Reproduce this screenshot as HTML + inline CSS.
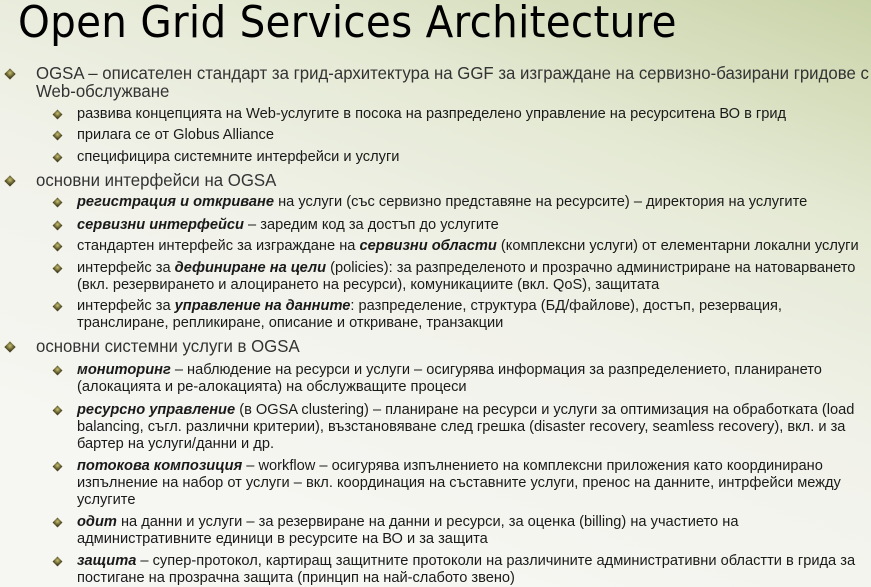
<!DOCTYPE html>
<html><head><meta charset="utf-8"><style>
body{margin:0;width:871px;height:587px;overflow:hidden;position:relative;font-family:"Liberation Sans",sans-serif;
background:linear-gradient(200deg,#c9d3a8 0%,#e4e9d3 25%,#f1f2ea 50%,#f6f6f2 80%);}
.t{position:absolute;left:18px;top:-3px;font-family:"DejaVu Sans",sans-serif;font-size:44px;color:#000;white-space:nowrap;letter-spacing:0.3px;transform:scaleX(0.92);transform-origin:0 0}
.l{position:absolute;white-space:nowrap;color:#222;transform-origin:0 0}
.a{left:36px;font-size:17.5px;color:#333;transform:scaleX(0.96)}
.b{left:77px;font-size:15px;color:#1a1a1a;transform:scaleX(0.975)}
.ba,.bb{position:absolute;width:8px;height:8px;background:radial-gradient(circle at 40% 40%,#c8c070,#4a4520 70%);transform:rotate(45deg)}
.ba{left:6px}.bb{left:54px;width:7px;height:7px}
i b,b i{font-weight:bold}
</style></head><body>
<div class="t">Open Grid Services Architecture</div>

<div class="ba" style="top:70px"></div>
<div class="l a" style="top:63px">OGSA – описателен стандарт за грид-архитектура на GGF за изграждане на сервизно-базирани гридове с</div>
<div class="l a" style="top:81px">Web-обслужване</div>
<div class="bb" style="top:111px"></div>
<div class="l b" style="top:105px">развива концепцията на Web-услугите в посока на разпределено управление на ресурситена ВО в грид</div>
<div class="bb" style="top:132px"></div>
<div class="l b" style="top:126px">прилага се от Globus Alliance</div>
<div class="bb" style="top:154px"></div>
<div class="l b" style="top:148px">специфицира системните интерфейси и услуги</div>

<div class="ba" style="top:177px"></div>
<div class="l a" style="top:170px">основни интерфейси на OGSA</div>
<div class="bb" style="top:199px"></div>
<div class="l b" style="top:193px"><b><i>регистрация и откриване</i></b> на услуги (със сервизно представяне на ресурсите) – директория на услугите</div>
<div class="bb" style="top:222px"></div>
<div class="l b" style="top:216px"><b><i>сервизни интерфейси</i></b> – заредим код за достъп до услугите</div>
<div class="bb" style="top:243px"></div>
<div class="l b" style="top:237px">стандартен интерфейс за изграждане на <b><i>сервизни области</i></b> (комплексни услуги) от елементарни локални услуги</div>
<div class="bb" style="top:265px"></div>
<div class="l b" style="top:259px">интерфейс за <b><i>дефиниране на цели</i></b> (policies): за разпределеното и прозрачно администриране на натоварването</div>
<div class="l b" style="top:276px">(вкл. резервирането и алоцирането на ресурси), комуникациите (вкл. QoS), защитата</div>
<div class="bb" style="top:303px"></div>
<div class="l b" style="top:297px">интерфейс за <b><i>управление на данните</i></b>: разпределение, структура (БД/файлове), достъп, резервация,</div>
<div class="l b" style="top:314px">транслиране, репликиране, описание и откриване, транзакции</div>

<div class="ba" style="top:343px"></div>
<div class="l a" style="top:336px">основни системни услуги в OGSA</div>
<div class="bb" style="top:367px"></div>
<div class="l b" style="top:361px"><b><i>мониторинг</i></b> – наблюдение на ресурси и услуги – осигурява информация за разпределението, планирането</div>
<div class="l b" style="top:378px">(алокацията и ре-алокацията) на обслужващите процеси</div>
<div class="bb" style="top:407px"></div>
<div class="l b" style="top:401px"><b><i>ресурсно управление</i></b> (в OGSA clustering) – планиране на ресурси и услуги за оптимизация на обработката (load</div>
<div class="l b" style="top:418px">balancing, съгл. различни критерии), възстановяване след грешка (disaster recovery, seamless recovery), вкл. и за</div>
<div class="l b" style="top:435px">бартер на услуги/данни и др.</div>
<div class="bb" style="top:463px"></div>
<div class="l b" style="top:457px"><b><i>потокова композиция</i></b> – workflow – осигурява изпълнението на комплексни приложения като координирано</div>
<div class="l b" style="top:474px">изпълнение на набор от услуги – вкл. координация на съставните услуги, пренос на данните, интрфейси между</div>
<div class="l b" style="top:491px">услугите</div>
<div class="bb" style="top:519px"></div>
<div class="l b" style="top:513px"><b><i>одит</i></b> на данни и услуги – за резервиране на данни и ресурси, за оценка (billing) на участието на</div>
<div class="l b" style="top:530px">административните единици в ресурсите на ВО и за защита</div>
<div class="bb" style="top:558px"></div>
<div class="l b" style="top:552px"><b><i>защита</i></b> – супер-протокол, картиращ защитните протоколи на различините административни областти в грида за</div>
<div class="l b" style="top:569px">постигане на прозрачна защита (принцип на най-слабото звено)</div>
</body></html>
